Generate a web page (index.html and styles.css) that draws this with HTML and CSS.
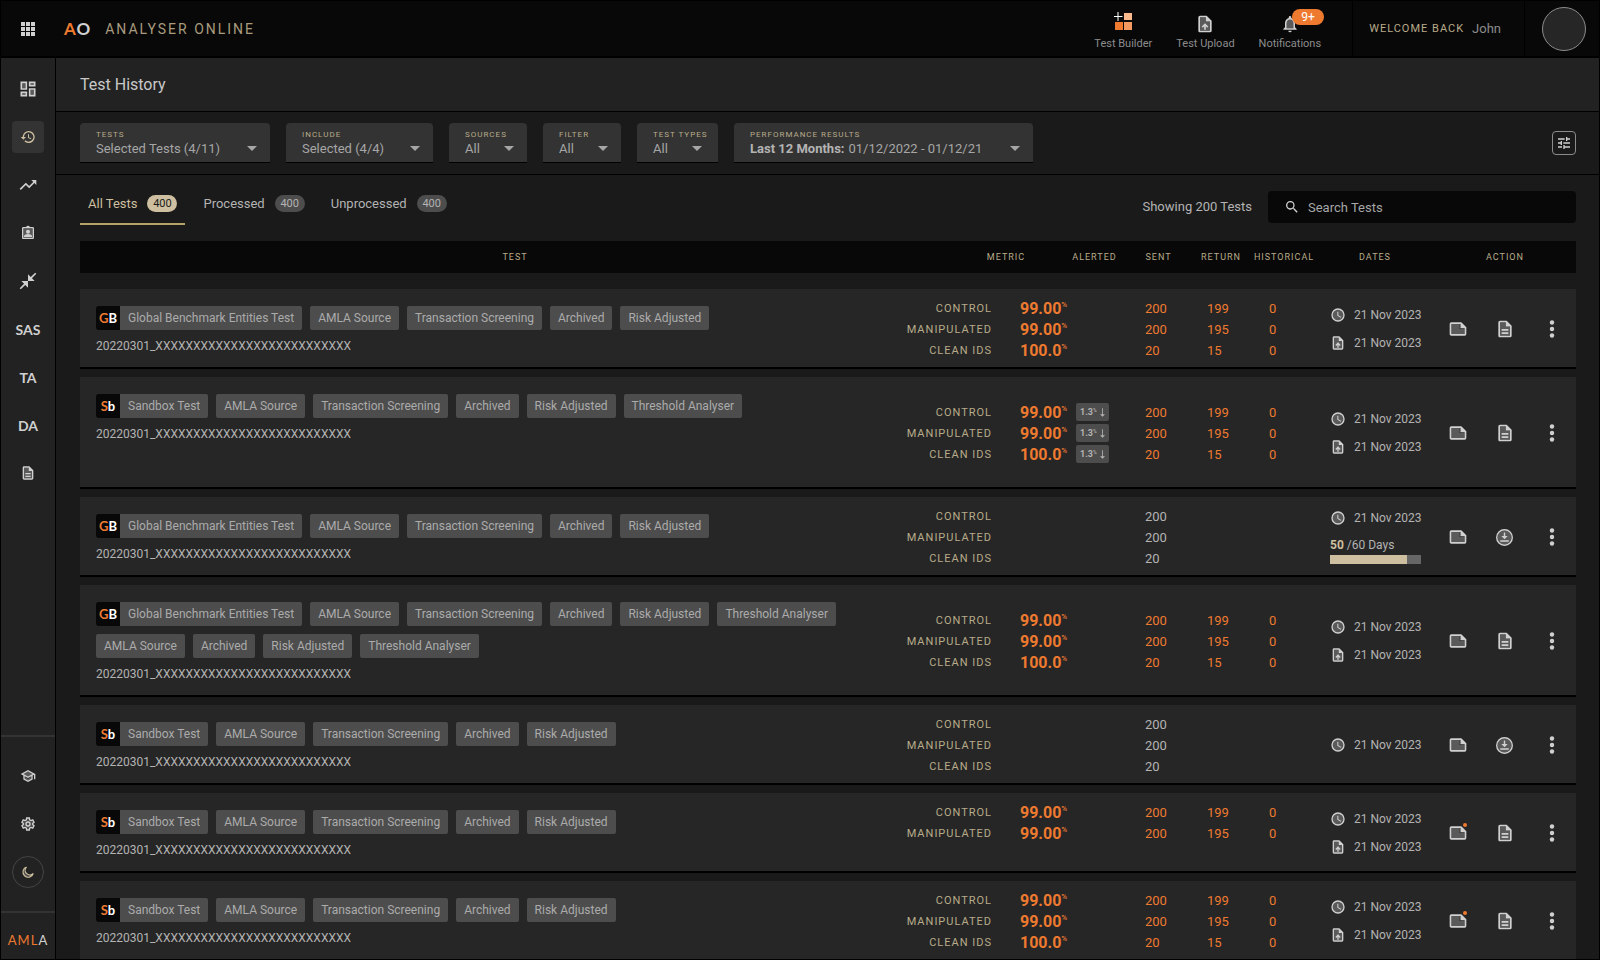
FILE: index.html
```html
<!DOCTYPE html>
<html lang="en">

<head>
    <meta charset="UTF-8">
    <meta name="viewport" content="width=device-width, initial-scale=1.0">
    <title>Analyser Online - Test History</title>
    <link rel="stylesheet" href="styles.css">
</head>

<body>
    <!-- Icon set -->
    <svg class="sprite" aria-hidden="true">
        <symbol id="i-apps" viewBox="0 0 14 14">
            <path d="M0 0h4v4H0zM5 0h4v4H5zM10 0h4v4h-4zM0 5h4v4H0zM5 5h4v4H5zM10 5h4v4h-4zM0 10h4v4H0zM5 10h4v4H5zM10 10h4v4h-4z" />
        </symbol>
        <symbol id="i-dashboard" viewBox="0 0 24 24">
            <path class="tone" d="M5 5h4v6H5zM15 13h4v6h-4zM15 5h4v2h-4zM5 17h4v2H5z" />
            <path d="M3 13h8V3H3v10zm2-8h4v6H5V5zm8 16h8V11h-8v10zm2-8h4v6h-4v-6zM13 3v6h8V3h-8zm6 4h-4V5h4v2zM3 21h8v-6H3v6zm2-4h4v2H5v-2z" />
        </symbol>
        <symbol id="i-history" viewBox="0 0 24 24">
            <path d="M13 3a9 9 0 0 0-9 9H1l3.9 3.9.1.1L9 12H6a7 7 0 1 1 2.06 4.94l-1.42 1.42A9 9 0 1 0 13 3zm-1 5v5l4.28 2.54.72-1.21-3.5-2.08V8z" />
        </symbol>
        <symbol id="i-trend" viewBox="0 0 24 24">
            <path d="M16 6l2.29 2.29-4.88 4.88-4-4L2 16.59 3.41 18l6-6 4 4 6.3-6.29L22 12V6z" />
        </symbol>
        <symbol id="i-profile" viewBox="0 0 24 24">
            <path class="tone" d="M5 5h14v14H5z" />
            <path d="M19 3h-4.2a3 3 0 0 0-5.6 0H5a2 2 0 0 0-2 2v14c0 1.1.9 2 2 2h14a2 2 0 0 0 2-2V5a2 2 0 0 0-2-2zm0 16H5V5h14zM12 13a3 3 0 1 0 0-6 3 3 0 0 0 0 6zm6 3.6c0-2-4-3.1-6-3.1s-6 1.1-6 3.1V18h12z" />
        </symbol>
        <symbol id="i-collapse" viewBox="0 0 24 24">
            <path d="M22 3.4 16.7 8.7 20 12h-8V4l3.3 3.3L20.6 2zM3.4 22l5.3-5.3L12 20v-8H4l3.3 3.3L2 20.6z" />
        </symbol>
        <symbol id="i-doc" viewBox="0 0 24 24">
            <path class="tone" d="M6 4h7v5h5v11H6z" />
            <path d="M8 16h8v2H8zm0-4h8v2H8zm6-10H6a2 2 0 0 0-2 2v16c0 1.1.9 2 2 2h12a2 2 0 0 0 2-2V8zm4 18H6V4h7v5h5z" />
        </symbol>
        <symbol id="i-upload" viewBox="0 0 24 24">
            <path class="tone" d="M6 4h7v5h5v11H6z" />
            <path d="M14 2H6a2 2 0 0 0-2 2v16c0 1.1.9 2 2 2h12a2 2 0 0 0 2-2V8zm4 18H6V4h7v5h5zM8 15l1.4 1.4L11 14.800V19h2v-4.2l1.6 1.6L16 15l-4-4z" />
        </symbol>
        <symbol id="i-note" viewBox="0 0 24 24">
            <path class="tone" d="M4 6h10v6h6v6H4z" />
            <path d="M16 4H4a2 2 0 0 0-2 2v12c0 1.1.9 2 2 2h16a2 2 0 0 0 2-2v-8zM4 18V6h11v5h5v7z" />
        </symbol>
        <symbol id="i-clock" viewBox="0 0 24 24">
            <circle class="tone" cx="12" cy="12" r="9" />
            <path d="M12 2a10 10 0 1 0 0 20 10 10 0 0 0 0-20zm0 18a8 8 0 1 1 0-16 8 8 0 0 1 0 16zm.5-13H11v6l5.2 3.2.8-1.3-4.5-2.7z" />
        </symbol>
        <symbol id="i-download" viewBox="0 0 24 24">
            <circle class="tone" cx="12" cy="12" r="10" />
            <path d="M12 0a12 12 0 1 0 0 24 12 12 0 0 0 0-24zm0 22a10 10 0 1 1 0-20 10 10 0 0 1 0 20zM6 16h12v2H6zM11 5h2v5h3.5L12 14.500 7.500 10H11z" />
        </symbol>
        <symbol id="i-more" viewBox="0 0 6 18">
            <circle cx="3" cy="2.500" r="2.200" />
            <circle cx="3" cy="9" r="2.200" />
            <circle cx="3" cy="15.500" r="2.200" />
        </symbol>
        <symbol id="i-school" viewBox="0 0 24 24">
            <path class="tone" d="M12 5.300 4.300 9 12 13l7.700-4zM7 13.300v3.200l5 2.500 5-2.500v-3.200L12 16z" />
            <path d="M12 3 1 9l4 2.200v6L12 21l7-3.800v-6l2-1.100V17h2V9zm6.800 6L12 12.700 5.200 9 12 5.300zM17 16l-5 2.700L7 16v-3.700l5 2.700 5-2.700z" />
        </symbol>
        <symbol id="i-gear" viewBox="0 0 24 24">
            <path class="line-shape" d="M10 3h4l.5 2.800 1.900 1.100 2.700-1 2 3.500-2.200 1.800v1.600l2.200 1.800-2 3.500-2.700-1-1.900 1.100L14 21h-4l-.5-2.800-1.900-1.100-2.700 1-2-3.500 2.200-1.800v-1.600L2.900 9.400l2-3.500 2.700 1 1.900-1.100z" />
            <circle class="line-shape" cx="12" cy="12" r="3" />
        </symbol>
        <symbol id="i-moon" viewBox="0 0 24 24">
            <path class="line-shape" d="M9.400 3.500A9 9 0 1 0 21 14.600 6.500 6.500 0 0 1 9.400 3.500z" />
        </symbol>
        <symbol id="i-bell" viewBox="0 0 24 24">
            <path class="tone" d="M12 6c-2.500 0-4 2-4 4.500V17h8v-6.500C16 8 14.500 6 12 6z" />
            <path d="M12 22a2 2 0 0 0 2-2h-4a2 2 0 0 0 2 2zm6-6v-5c0-3.100-1.600-5.600-4.500-6.300V4a1.500 1.500 0 0 0-3 0v.7C7.600 5.400 6 7.900 6 11v5l-2 2v1h16v-1zm-2 1H8v-6c0-2.500 1.500-4.500 4-4.500s4 2 4 4.500z" />
        </symbol>
        <symbol id="i-builder" viewBox="0 0 18 18">
            <path fill="#fff" d="M3.500 0h1v4h4v1h-4v4h-1V5h-4V4h4z" />
            <path fill="#f9b98c" d="M10 1h8v7h-8z" />
            <path fill="#ee7a30" d="M1 10h8v8H1z" />
            <path fill="#f39a60" d="M10 10h8v8h-8z" />
        </symbol>
        <symbol id="i-search" viewBox="0 0 24 24">
            <path d="M15.500 14h-.8l-.3-.3a6.500 6.500 0 1 0-.7.7l.3.3v.8l5 5 1.500-1.500zm-6 0a4.500 4.500 0 1 1 0-9 4.500 4.500 0 0 1 0 9z" />
        </symbol>
        <symbol id="i-tune" viewBox="0 0 24 24">
            <path d="M3 17v2h6v-2zM3 5v2h10V5zm10 16v-2h8v-2h-8v-2h-2v6zM7 9v2H3v2h4v2h2V9zm14 4v-2H11v2zm-6-4h2V7h4V5h-4V3h-2z" />
        </symbol>
        <symbol id="i-down" viewBox="0 0 6 10">
            <path d="M2.500 0h1v7H6L3 10 0 7h2.500z" />
        </symbol>
    </svg>

    <div class="app">
        <header class="topbar">
            <button class="apps-btn" aria-label="Apps"><svg class="icon-14"><use href="#i-apps" /></svg></button>
            <div class="logo"><span>A</span>O</div>
            <div class="brand">ANALYSER ONLINE</div>
            <nav class="top-links">
                <a href="#builder"><svg class="icon-18"><use href="#i-builder" /></svg>Test Builder</a>
                <a href="#upload"><svg class="icon-20"><use href="#i-upload" /></svg>Test Upload</a>
                <a href="#notifications"><svg class="icon-20"><use href="#i-bell" /></svg>Notifications<span class="notif-badge">9+</span></a>
            </nav>
            <div class="welcome">WELCOME BACK <span>John</span></div>
            <div class="account"><button class="avatar" aria-label="Account"></button></div>
        </header>

        <aside class="sidebar">
            <nav class="side-nav">
                <a href="#dashboard" aria-label="Dashboard"><svg class="icon-20"><use href="#i-dashboard" /></svg></a>
                <a href="#history" class="active" aria-label="Test History"><svg class="icon-16"><use href="#i-history" /></svg></a>
                <a href="#trends" aria-label="Trends"><svg class="icon-20"><use href="#i-trend" /></svg></a>
                <a href="#profiles" aria-label="Profiles"><svg class="icon-16"><use href="#i-profile" /></svg></a>
                <a href="#compare" aria-label="Compare"><svg class="icon-20"><use href="#i-collapse" /></svg></a>
                <a href="#sas">SAS</a>
                <a href="#ta">TA</a>
                <a href="#da">DA</a>
                <a href="#reports" aria-label="Reports"><svg class="icon-16"><use href="#i-doc" /></svg></a>
            </nav>
            <nav class="side-nav side-bottom">
                <a href="#learn" aria-label="Learn"><svg class="icon-16"><use href="#i-school" /></svg></a>
                <a href="#settings" aria-label="Settings"><svg class="icon-16"><use href="#i-gear" /></svg></a>
                <button class="theme-btn" aria-label="Dark mode"><svg class="icon-14"><use href="#i-moon" /></svg></button>
            </nav>
            <div class="amla"><span>AML</span>A</div>
        </aside>

        <main>
            <h1>Test History</h1>

            <form class="filters">
                <div class="field field-tests">
                    <label for="tests">TESTS</label>
                    <select id="tests"><option>Selected Tests (4/11)</option></select>
                </div>
                <div class="field field-include">
                    <label for="include">INCLUDE</label>
                    <select id="include"><option>Selected (4/4)</option></select>
                </div>
                <div class="field field-small">
                    <label for="sources">SOURCES</label>
                    <select id="sources"><option>All</option></select>
                </div>
                <div class="field field-small">
                    <label for="filter">FILTER</label>
                    <select id="filter"><option>All</option></select>
                </div>
                <div class="field field-types">
                    <label for="types">TEST TYPES</label>
                    <select id="types"><option>All</option></select>
                </div>
                <div class="field field-results">
                    <label for="results">PERFORMANCE RESULTS</label>
                    <div class="range">
                        <strong>Last 12 Months:</strong>
                        <select id="results"><option>01/12/2022 - 01/12/21</option></select>
                    </div>
                </div>
                <button type="button" class="tune-btn" aria-label="Filter settings"><svg class="icon-16"><use href="#i-tune" /></svg></button>
            </form>

            <div class="toolbar">
                <div class="tabs">
                    <button class="tab active">All Tests <span>400</span></button>
                    <button class="tab">Processed <span>400</span></button>
                    <button class="tab">Unprocessed <span>400</span></button>
                </div>
                <p class="showing">Showing 200 Tests</p>
                <label class="search">
                    <svg class="icon-16"><use href="#i-search" /></svg>
                    <input type="text" placeholder="Search Tests" aria-label="Search Tests">
                </label>
            </div>

            <table>
                <thead>
                    <tr>
                        <th>TEST</th>
                        <th>METRIC</th>
                        <th>ALERTED</th>
                        <th>SENT</th>
                        <th>RETURN</th>
                        <th>HISTORICAL</th>
                        <th>DATES</th>
                        <th>ACTION</th>
                    </tr>
                </thead>
                <tbody id="testRows"></tbody>
            </table>
        </main>
    </div>

    <script>
        const baseTags = ['AMLA Source', 'Transaction Screening', 'Archived', 'Risk Adjusted'];
        const labels = ['CONTROL', 'MANIPULATED', 'CLEAN IDS'];
        const metrics = ['99.00', '99.00', '100.0'];
        const sent = [200, 200, 20];
        const returned = [199, 195, 15];

        const tests = [
            { type: 'GB', tags: baseTags, processed: true },
            { type: 'Sb', tags: [...baseTags, 'Threshold Analyser'], processed: true, alerted: true, tall: true },
            { type: 'GB', tags: baseTags, days: 50 },
            { type: 'GB', tags: [...baseTags, 'Threshold Analyser', 'AMLA Source', 'Archived', 'Risk Adjusted', 'Threshold Analyser'], processed: true },
            { type: 'Sb', tags: baseTags },
            { type: 'Sb', tags: baseTags, processed: true, unread: true, lines: 2 },
            { type: 'Sb', tags: baseTags, processed: true, unread: true }
        ];

        const names = { GB: 'Global Benchmark Entities Test', Sb: 'Sandbox Test' };

        function icon(name, size) {
            return `<svg class="icon-${size}"><use href="#i-${name}" /></svg>`;
        }

        function numbers(values) {
            return values.map(value => `<div class="line">${value}</div>`).join('');
        }

        // Dates cell: created date, then either the upload date or the days left
        function dates(test) {
            let html = `<div class="date">${icon('clock', 16)}21 Nov 2023</div>`;
            if (test.processed) {
                html += `<div class="date">${icon('upload', 16)}21 Nov 2023</div>`;
            }
            if (test.days) {
                html += `<div class="days"><div><b>${test.days}</b> /60 Days</div>
                    <progress max="100" value="85" aria-label="Days used"></progress></div>`;
            }
            return html;
        }

        function testRow(test) {
            const count = test.lines || 3;
            const shown = labels.slice(0, count);
            return `
                <tr class="${test.tall ? 'tall' : ''} ${test.processed ? 'processed' : ''}">
                    <td>
                        <div class="tags">
                            <span class="tag tag-type"><b><i>${test.type[0]}</i>${test.type[1]}</b>${names[test.type]}</span>
                            ${test.tags.map(tag => `<span class="tag">${tag}</span>`).join('')}
                        </div>
                        <div class="file">20220301_XXXXXXXXXXXXXXXXXXXXXXXXXX</div>
                    </td>
                    <td class="lines">
                        ${shown.map((label, i) => `<div class="line metric"><span>${label}</span>${test.processed ? `<strong>${metrics[i]}<sup>%</sup></strong>` : ''}</div>`).join('')}
                    </td>
                    <td class="lines">${test.alerted ? shown.map(() => `<div class="line"><span class="alert">1.3<sup>%</sup>${icon('down', 'down')}</span></div>`).join('') : ''}</td>
                    <td class="lines num">${numbers(sent.slice(0, count))}</td>
                    <td class="lines num">${test.processed ? numbers(returned.slice(0, count)) : ''}</td>
                    <td class="lines num">${test.processed ? numbers([0, 0, 0].slice(0, count)) : ''}</td>
                    <td class="dates">${dates(test)}</td>
                    <td class="actions">
                        <button aria-label="Notes" class="${test.unread ? 'unread' : ''}">${icon('note', 20)}</button>
                        <button aria-label="${test.processed ? 'Report' : 'Download'}">${test.processed ? icon('doc', 20) : icon('download', 17)}</button>
                        <button aria-label="More">${icon('more', 'more')}</button>
                    </td>
                </tr>`;
        }

        document.getElementById('testRows').innerHTML = tests.map(testRow).join('');
    </script>
</body>

</html>
```
FILE: styles.css
```css
* {
    margin: 0;
    padding: 0;
    box-sizing: border-box;
}

body {
    font-family: Roboto, 'Liberation Sans', sans-serif;
    font-size: 12px;
    color: #b3b3b3;
    background-color: #1a1a1a;
}

button,
input,
select {
    font: inherit;
    color: inherit;
    background: none;
    border: none;
}

button {
    cursor: pointer;
}

a {
    color: inherit;
    text-decoration: none;
}

.sprite {
    display: none;
}

svg {
    display: block;
    flex: none;
    fill: #d0d0d0;
}

.tone {
    fill: #5a5a5a;
}

.line-shape {
    fill: #4a4a4a;
    stroke: currentColor;
    stroke-width: 2;
}

.icon-14 {
    width: 14px;
    height: 14px;
}

.icon-16 {
    width: 16px;
    height: 16px;
}

.icon-17 {
    width: 17px;
    height: 17px;
}

.icon-18 {
    width: 18px;
    height: 18px;
}

.icon-20 {
    width: 20px;
    height: 20px;
}

.icon-more {
    width: 6px;
    height: 18px;
}

.icon-down {
    width: 5px;
    height: 9px;
    fill: #b3b3b3;
}

.app {
    display: grid;
    grid-template-columns: 55px 1fr;
    grid-template-rows: auto 1fr;
    height: 100vh;
    border: 1px solid #000;
}

/* Top bar */
.topbar {
    grid-column: 1 / -1;
    display: flex;
    align-items: center;
    height: 57px;
    background-color: #080808;
    border-bottom: 2px solid #000;
}

.apps-btn {
    width: 54px;
    display: flex;
    justify-content: center;
}

.logo {
    margin-left: 9px;
    font-family: Lato, sans-serif;
    font-size: 17px;
    font-weight: 700;
    letter-spacing: 1px;
    color: #d0d0d0;
}

.logo span {
    color: #ee7a30;
}

.brand {
    margin-left: 14px;
    font-size: 14px;
    letter-spacing: 2px;
    color: #a89b7e;
}

.top-links {
    display: flex;
    gap: 24px;
    margin-left: auto;
    padding-right: 31px;
}

.top-links a {
    position: relative;
    display: flex;
    flex-direction: column;
    align-items: center;
    justify-content: flex-end;
    gap: 4px;
    height: 42px;
    font-size: 11px;
    line-height: 12px;
    color: #8c8c8c;
}

.top-links .icon-18 {
    margin-bottom: 4px;
}

.notif-badge {
    position: absolute;
    top: 1px;
    right: -3px;
    width: 32px;
    line-height: 16px;
    border-radius: 8px;
    background-color: #ee7a30;
    color: #fff;
    font-size: 12px;
    text-align: center;
}

.welcome,
.account {
    display: flex;
    align-items: center;
    height: 100%;
    border-left: 1px solid #000;
}

.welcome {
    gap: 8px;
    padding: 0 23px 0 16px;
    font-size: 11px;
    letter-spacing: 1px;
    color: #b8ab8a;
}

.welcome span {
    font-size: 13px;
    letter-spacing: 0;
    color: #8c8c8c;
}

.account {
    padding: 0 13px 0 17px;
}

.avatar {
    width: 44px;
    height: 44px;
    border: 1px solid #8c8c8c;
    border-radius: 50%;
    background-color: #262626;
}

/* Sidebar */
.sidebar {
    display: flex;
    flex-direction: column;
    background-color: #222;
    border-right: 1px solid #000;
    min-height: 0;
}

.side-nav {
    display: flex;
    flex-direction: column;
    align-items: center;
    gap: 16px;
    padding-top: 15px;
    font-family: Lato, sans-serif;
    font-size: 14px;
    font-weight: 700;
    color: #d0d0d0;
}

.side-nav a,
.theme-btn {
    display: flex;
    align-items: center;
    justify-content: center;
    width: 32px;
    height: 32px;
    border-radius: 4px;
}

.side-nav .active {
    background-color: #333;
}

.active svg {
    fill: #cdbf9f;
}

.side-nav .theme-btn {
    border: 1px solid #444;
    border-radius: 50%;
    color: #cdbf9f;
}

.side-bottom {
    margin-top: auto;
    padding: 23px 0;
    border-top: 2px solid #333;
}

.amla {
    padding: 18px 0 10px;
    border-top: 2px solid #333;
    font-family: Lato, sans-serif;
    font-size: 13px;
    line-height: 18px;
    letter-spacing: 1px;
    text-align: center;
    color: #d0d0d0;
}

.amla span {
    color: #ee7a30;
}

/* Main area */
main {
    min-width: 0;
    min-height: 0;
    overflow-y: auto;
    scrollbar-width: none;
}

h1 {
    padding: 0 24px;
    font-size: 16px;
    font-weight: 400;
    line-height: 53px;
    color: #c8c8c8;
    background-color: #222;
    border-bottom: 1px solid #000;
}

.filters {
    display: flex;
    align-items: center;
    gap: 16px;
    padding: 11px 23px 11px 24px;
    border-bottom: 1px solid #000;
}

.field {
    height: 40px;
    padding: 7px 0 0 16px;
    background-color: #333;
    border-bottom: 1px solid #000;
    border-radius: 4px 4px 0 0;
}

.field label {
    display: block;
    font-size: 8px;
    line-height: 9px;
    letter-spacing: 1px;
    color: #b8ab8a;
}

.field select {
    appearance: none;
    display: block;
    width: 100%;
    height: 18px;
    font-size: 13px;
    color: #a6a6a6;
    background: url("data:image/svg+xml,%3Csvg xmlns='http://www.w3.org/2000/svg' width='10' height='5'%3E%3Cpath d='M0 0h10L5 5z' fill='%23a6a6a6'/%3E%3C/svg%3E") no-repeat right 13px center;
}

.field-tests {
    width: 190px;
}

.field-include {
    width: 147px;
}

.field-small {
    width: 78px;
}

.field-types {
    width: 81px;
    padding-right: 3px;
}

.field-types label {
    white-space: nowrap;
}

.field-results {
    width: 299px;
}

.range {
    display: flex;
    align-items: center;
    gap: 4px;
    font-size: 13px;
    white-space: nowrap;
}

.range select {
    flex: 1;
}

.tune-btn {
    display: flex;
    align-items: center;
    justify-content: center;
    width: 24px;
    height: 24px;
    margin-left: auto;
    border: 1px solid #8c8c8c;
    border-radius: 4px;
}

.toolbar {
    display: flex;
    align-items: flex-start;
    gap: 16px;
    padding: 16px 23px 16px 24px;
    font-size: 13px;
}

.tabs {
    display: flex;
    gap: 10px;
    margin-right: auto;
}

.tab {
    display: flex;
    align-items: center;
    gap: 10px;
    height: 34px;
    padding: 0 8px 8px;
    border-bottom: 2px solid transparent;
}

.tab span {
    width: 30px;
    border-radius: 9px;
    background-color: #4d4d4d;
    font-size: 11px;
    line-height: 17px;
}

.tab.active {
    color: #cdbf9f;
    border-color: #b8a26b;
}

.tab.active span {
    color: #1a1a1a;
    background-color: #cdbf9f;
}

.showing {
    line-height: 32px;
}

.search {
    display: flex;
    align-items: center;
    gap: 8px;
    width: 308px;
    height: 32px;
    padding: 0 16px;
    border-radius: 4px;
    background-color: #080808;
}

.search input {
    flex: 1;
    min-width: 0;
    outline: none;
}

.search input::placeholder {
    color: #a6a6a6;
}

/* Tests table */
table {
    display: block;
    padding: 0 23px 0 24px;
}

thead {
    display: block;
    margin-bottom: 16px;
}

tr {
    display: grid;
    grid-template-columns: 1fr 112px 65px 63px 62px 64px 118px 142px;
}

thead tr {
    background-color: #080808;
}

th {
    font-size: 9px;
    font-weight: 400;
    line-height: 32px;
    letter-spacing: 1px;
    text-align: center;
    color: #b8ab8a;
}

tbody {
    display: flex;
    flex-direction: column;
    gap: 8px;
}

tbody tr {
    grid-template-columns: 1fr 184px 51px 63px 62px 64px 118px 142px;
    min-height: 80px;
    padding-top: 2px;
    background-color: #262626;
    border-bottom: 2px solid #000;
}

tbody .tall {
    min-height: 112px;
}

td:first-child {
    padding: 15px 16px 13px;
}

.tags {
    display: flex;
    flex-wrap: wrap;
    gap: 8px;
    margin-bottom: 8px;
}

.tag {
    height: 24px;
    padding: 0 8px;
    border-radius: 2px;
    line-height: 24px;
    color: #ababab;
    background-color: #4d4d4d;
}

.tag-type {
    display: flex;
    gap: 8px;
    padding-left: 0;
}

.tag b {
    width: 24px;
    border-radius: 2px 0 0 2px;
    background-color: #080808;
    color: #fff;
    font-family: Lato, sans-serif;
    font-size: 13px;
    font-weight: 700;
    text-align: center;
}

.tag i {
    font-style: normal;
    color: #ee7a30;
}

.file {
    line-height: 16px;
}

.lines {
    align-self: center;
    height: 63px;
}

.line {
    display: flex;
    align-items: center;
    height: 21px;
}

.num {
    padding-left: 18px;
    font-size: 13px;
}

.num + .num {
    padding-left: 17px;
}

.processed .num {
    color: #ee7a30;
}

.metric {
    gap: 28px;
}

.metric span {
    width: 100px;
    font-size: 11px;
    letter-spacing: 1px;
    text-align: right;
    color: #b8ab8a;
}

.metric strong {
    display: flex;
    font-size: 16px;
    color: #ee7a30;
}

sup {
    font-size: 8px;
    font-weight: 500;
    line-height: 12px;
}

.alert {
    display: flex;
    align-items: center;
    width: 33px;
    height: 18px;
    padding: 0 4px;
    border-radius: 2px;
    font-size: 9px;
    font-weight: 700;
    background-color: #4d4d4d;
}

.alert sup {
    font-size: 5px;
    line-height: 8px;
    align-self: flex-start;
    margin-top: 3px;
}

.alert svg {
    margin-left: auto;
}

.dates {
    display: flex;
    flex-direction: column;
    justify-content: center;
    gap: 12px;
    padding: 0 13px 0 14px;
    white-space: nowrap;
}

.date {
    display: flex;
    align-items: center;
    gap: 8px;
    height: 16px;
}

.days b {
    color: #cdbf9f;
}

progress {
    appearance: none;
    display: block;
    width: 100%;
    height: 9px;
    margin-top: 3px;
}

progress::-webkit-progress-bar {
    background-color: #666;
}

progress::-webkit-progress-value {
    background-color: #cdbf9f;
}

.actions {
    display: grid;
    grid-template-columns: repeat(3, 1fr);
}

.actions button {
    position: relative;
    display: flex;
    align-items: center;
    justify-content: center;
}

/* Orange dot on notes that have not been read */
.unread::after {
    content: '';
    position: absolute;
    top: calc(50% - 10px);
    right: 14px;
    width: 4px;
    height: 4px;
    border-radius: 50%;
    background-color: #ee7a30;
}
```
